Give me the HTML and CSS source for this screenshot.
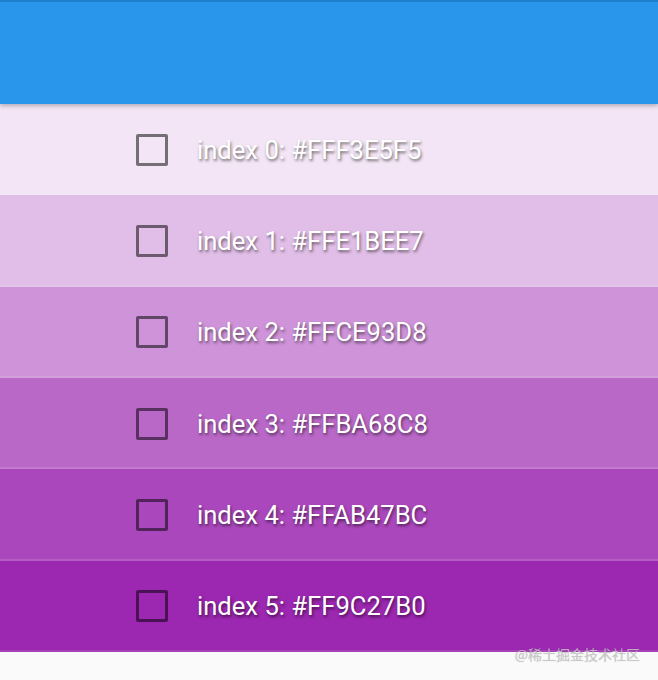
FILE: index.html
```html
<!DOCTYPE html>
<html lang="en">

<head>
  <meta charset="UTF-8">
  <meta name="viewport" content="width=device-width, initial-scale=1.0">
  <title>Color List</title>
  <link rel="stylesheet" href="styles.css">
</head>

<body>
  <header class="app-bar"></header>

  <ul class="color-list">
    <li class="color-row" style="background-color: #F3E5F5">
      <span class="checkbox"></span>
      <span class="label">index 0: #FFF3E5F5</span>
    </li>
    <li class="color-row" style="background-color: #E1BEE7">
      <span class="checkbox"></span>
      <span class="label">index 1: #FFE1BEE7</span>
    </li>
    <li class="color-row" style="background-color: #CE93D8">
      <span class="checkbox"></span>
      <span class="label">index 2: #FFCE93D8</span>
    </li>
    <li class="color-row" style="background-color: #BA68C8">
      <span class="checkbox"></span>
      <span class="label">index 3: #FFBA68C8</span>
    </li>
    <li class="color-row" style="background-color: #AB47BC">
      <span class="checkbox"></span>
      <span class="label">index 4: #FFAB47BC</span>
    </li>
    <li class="color-row" style="background-color: #9C27B0">
      <span class="checkbox"></span>
      <span class="label">index 5: #FF9C27B0</span>
    </li>
  </ul>

  <div class="watermark">@稀土掘金技术社区</div>
</body>

</html>
```

FILE: styles.css
```css
html,
body {
  margin: 0;
  padding: 0;
}

body {
  width: 658px;
  height: 680px;
  background-color: #FAFAFA;
  font-family: Roboto, 'Noto Sans', sans-serif;
  position: relative;
  overflow: hidden;
}

.app-bar {
  height: 104px;
  background-color: #2996EC;
  border-top: 2px solid #1F7FCB;
  box-sizing: border-box;
  box-shadow: 0 2px 4px rgba(0, 0, 0, 0.25);
  position: relative;
  z-index: 1;
}

.color-list {
  list-style: none;
  margin: 0;
  padding: 0;
}

.color-row {
  height: 91.33px;
  display: flex;
  align-items: center;
  padding-left: 136px;
  box-sizing: border-box;
  box-shadow: inset 0 -2px 0 rgba(255, 255, 255, 0.12);
}

.checkbox {
  width: 32px;
  height: 32px;
  box-sizing: border-box;
  border: 3px solid rgba(0, 0, 0, 0.52);
  border-radius: 2px;
  margin-right: 29px;
}

.label {
  color: #fff;
  font-size: 25.6px;
  text-shadow: 1px 2px 3px rgba(0, 0, 0, 0.55);
}

.watermark {
  position: absolute;
  right: 18px;
  top: 644px;
  font-family: 'Noto Sans CJK SC', sans-serif;
  font-size: 14px;
  color: rgba(200, 200, 200, 0.85);
  text-shadow: 0 0 1px rgba(0, 0, 0, 0.2);
}
```
